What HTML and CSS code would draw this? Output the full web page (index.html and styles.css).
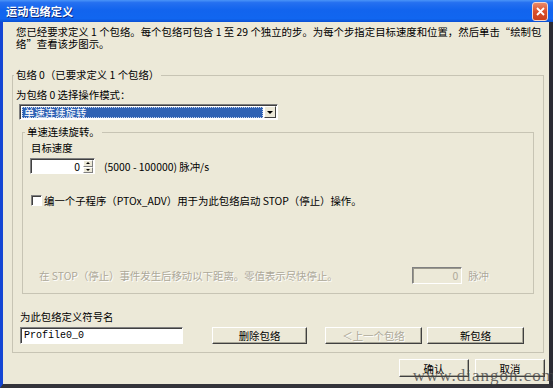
FILE: index.html
```
<!DOCTYPE html>
<html lang="zh-CN">
<head>
    <meta charset="UTF-8">
    <title>运动包络定义</title>
    <link rel="stylesheet" href="styles.css">
</head>
<body>
<div class="window">
    <div class="titlebar">
        <span class="title">运动包络定义</span>
        <div class="close">
            <svg width="9" height="9" viewBox="0 0 9 9"><path d="M1 1 L8 8 M8 1 L1 8" stroke="#fff" stroke-width="1.8" fill="none"/></svg>
        </div>
    </div>
    <div class="frame">
        <p class="intro">您已经要求定义 1 个包络。每个包络可包含 1 至 29 个独立的步。为每个步指定目标速度和位置，然后单击“绘制包<br/>络”查看该步图示。</p>

        <fieldset class="group outer">
            <legend>包络 0（已要求定义 1 个包络）</legend>
            <div class="label mode_label">为包络 0 选择操作模式：</div>
            <div class="combo">
                <span class="combo_value">单速连续旋转</span>
                <span class="combo_btn"><i class="tri_down"></i></span>
            </div>

            <fieldset class="group inner">
                <legend>单速连续旋转。</legend>
                <div class="label speed_label">目标速度</div>
                <div class="speed_row">
                    <div class="spin">
                        <span class="spin_val">0</span>
                        <span class="spin_btns">
                            <span class="spin_b"><i class="tri_up_s"></i></span>
                            <span class="spin_b"><i class="tri_down_s"></i></span>
                        </span>
                    </div>
                    <span class="range">(5000 - 100000) 脉冲/s</span>
                </div>
                <div class="check_row">
                    <span class="checkbox"></span>
                    <span>编一个子程序（PTOx_ADV）用于为此包络启动 STOP（停止）操作。</span>
                </div>
                <div class="stop_row">
                    <span class="disabled_text stop_text">在 STOP（停止）事件发生后移动以下距离。零值表示尽快停止。</span>
                    <div class="dist">
                        <span class="dist_input">0</span>
                        <span class="disabled_text">脉冲</span>
                    </div>
                </div>
            </fieldset>

            <div class="label name_label">为此包络定义符号名</div>
            <div class="name_row">
                <div class="text_input">Profile0_0</div>
                <button class="btn btn_del">删除包络</button>
                <button class="btn btn_prev" disabled>＜上一个包络</button>
                <button class="btn btn_new">新包络</button>
            </div>
        </fieldset>

        <div class="footer">
            <button class="btn btn_ok">确认</button>
            <button class="btn btn_cancel">取消</button>
        </div>
    </div>
    <div class="watermark">www.diangon.com</div>
</div>
</body>
</html>
```

FILE: styles.css
```
body{
    margin: 0;
    background-color: #ece9d8;
    font-family: "Noto Sans CJK SC", sans-serif;
    font-size: 10.4px;
    color: #000;
}

.window{
    position: relative;
    width: 553px;
    height: 388px;
    display: flex;
    flex-direction: column;
    overflow: hidden;
    background-color: #ece9d8;
}

.titlebar{
    height: 22px;
    flex-shrink: 0;
    display: flex;
    align-items: center;
    padding-left: 6px;
    background: linear-gradient(#4a94f8 0%, #2570f0 12%, #1264ee 45%, #1166f0 85%, #0a50d4 100%);
}

.title{
    color: white;
    font-weight: bold;
    font-size: 11.2px;
    text-shadow: 1px 1px 0 #0a2a80;
}

.close{
    margin-left: auto;
    margin-right: 5px;
    width: 14px;
    height: 17px;
    display: flex;
    justify-content: center;
    align-items: center;
    border: 1px solid #f4d7cc;
    border-radius: 3px;
    background: linear-gradient(#e98a6a, #d9502b 50%, #c9401c);
}

.frame{
    flex: 1;
    display: flex;
    flex-direction: column;
    border-left: 3px solid #1446d4;
    border-right: 4px solid #2c2c34;
    border-bottom: 4px solid #34343a;
}

.intro{
    margin: 4px 0 0 13px;
    line-height: 12px;
    white-space: nowrap;
}

.group{
    margin: 0;
    padding: 0;
    min-width: 0;
    box-sizing: border-box;
    border: 1px solid #c7c4b4;
}

.group legend{
    padding: 0 2px;
    line-height: 12px;
}

.outer{
    margin: 19px 0 0 9px;
    width: 532px;
    padding-bottom: 8px;
}

.outer > legend{
    margin-left: 1px;
}

.label{
    line-height: 12px;
}

.mode_label{
    margin: 8px 0 0 3px;
}

.combo{
    margin: 3px 0 0 6px;
    width: 259px;
    height: 16px;
    box-sizing: border-box;
    display: flex;
    padding: 1px;
    background-color: white;
    border: 1px solid;
    border-color: #808080 #fff #fff #808080;
    box-shadow: inset 1px 1px 0 #404040;
}

.combo_value{
    flex: 1;
    margin: 1px 1px 0 1px;
    padding-left: 2px;
    display: flex;
    align-items: center;
    line-height: 11px;
    color: white;
    background-color: #2f62b4;
    outline: 1px dotted #c8d4ea;
    outline-offset: -1px;
}

.combo_btn{
    width: 12px;
    display: flex;
    justify-content: center;
    align-items: center;
    background-color: #ece9d8;
    border: 1px solid;
    border-color: #fff #404040 #404040 #fff;
    box-sizing: border-box;
}

.tri_down{
    width: 0;
    height: 0;
    border-left: 3px solid transparent;
    border-right: 3px solid transparent;
    border-top: 3px solid #000;
}

.inner{
    margin: 6px 0 0 9px;
    width: 512px;
    padding-bottom: 9px;
}

.inner > legend{
    margin-left: 2px;
}

.speed_label{
    margin: 4px 0 0 8px;
}

.speed_row{
    margin: 4px 0 0 7px;
    height: 16px;
    display: flex;
    align-items: center;
    gap: 9px;
}

.spin{
    width: 65px;
    height: 16px;
    box-sizing: border-box;
    display: flex;
    align-items: stretch;
    background-color: white;
    border: 1px solid;
    border-color: #808080 #fff #fff #808080;
    box-shadow: inset 1px 1px 0 #404040;
    padding: 1px 1px 0 1px;
}

.spin_val{
    flex: 1;
    text-align: right;
    padding-right: 3px;
    line-height: 13px;
}

.spin_btns{
    width: 10px;
    display: flex;
    flex-direction: column;
}

.spin_b{
    flex: 1;
    display: flex;
    justify-content: center;
    align-items: center;
    background-color: #ece9d8;
    border: 1px solid;
    border-color: #fff #808080 #808080 #fff;
}

.tri_up_s{
    border-left: 2px solid transparent;
    border-right: 2px solid transparent;
    border-bottom: 2px solid #000;
}

.tri_down_s{
    border-left: 2px solid transparent;
    border-right: 2px solid transparent;
    border-top: 2px solid #000;
}

.check_row{
    margin: 20px 0 0 8px;
    height: 13px;
    display: flex;
    align-items: center;
    gap: 2px;
}

.checkbox{
    width: 11px;
    height: 11px;
    box-sizing: border-box;
    background-color: white;
    border: 1px solid;
    border-color: #808080 #fff #fff #808080;
    box-shadow: inset 1px 1px 0 #404040;
}

.stop_row{
    margin: 60px 0 0 16px;
    height: 17px;
    display: flex;
    align-items: center;
}

.disabled_text{
    color: #aca899;
    text-shadow: 1px 1px 0 #fff;
}

.dist{
    margin-left: auto;
    margin-right: 44px;
    display: flex;
    align-items: center;
    gap: 6px;
}

.dist_input{
    width: 50px;
    height: 17px;
    box-sizing: border-box;
    text-align: right;
    padding-right: 3px;
    line-height: 15px;
    color: #aca899;
    border: 1px solid;
    border-color: #808080 #fff #fff #808080;
    box-shadow: inset 1px 1px 0 #9a988c;
}

.name_label{
    margin: 17px 0 0 7px;
}

.name_row{
    margin: 4px 0 0 7px;
    height: 17px;
    display: flex;
}

.text_input{
    width: 163px;
    box-sizing: border-box;
    padding: 1px 0 0 3px;
    line-height: 14px;
    font-family: "Liberation Mono", monospace;
    font-size: 10px;
    background-color: white;
    border: 1px solid;
    border-color: #808080 #fff #fff #808080;
    box-shadow: inset 1px 1px 0 #404040;
}

.btn{
    margin: 0;
    padding: 0;
    box-sizing: border-box;
    font-family: inherit;
    font-size: inherit;
    color: #000;
    background-color: #ece9d8;
    border: 1px solid;
    border-color: #fff #404040 #404040 #fff;
    box-shadow: inset -1px -1px 0 #a8a697;
}

.btn:disabled{
    color: #aca899;
    text-shadow: 1px 1px 0 #fff;
}

.btn_del{
    margin-left: 29px;
    width: 95px;
}

.btn_prev{
    margin-left: 18px;
    width: 97px;
}

.btn_new{
    margin-left: 5px;
    width: 97px;
}

.footer{
    margin-top: 6px;
    padding-right: 4px;
    display: flex;
    justify-content: flex-end;
    gap: 6px;
}

.footer .btn{
    width: 70px;
    height: 18px;
}

.watermark{
    position: absolute;
    right: -3px;
    bottom: 2px;
    font-family: "Liberation Serif", serif;
    font-size: 17px;
    letter-spacing: 1px;
    color: rgba(70, 70, 70, 0.8);
}
```
